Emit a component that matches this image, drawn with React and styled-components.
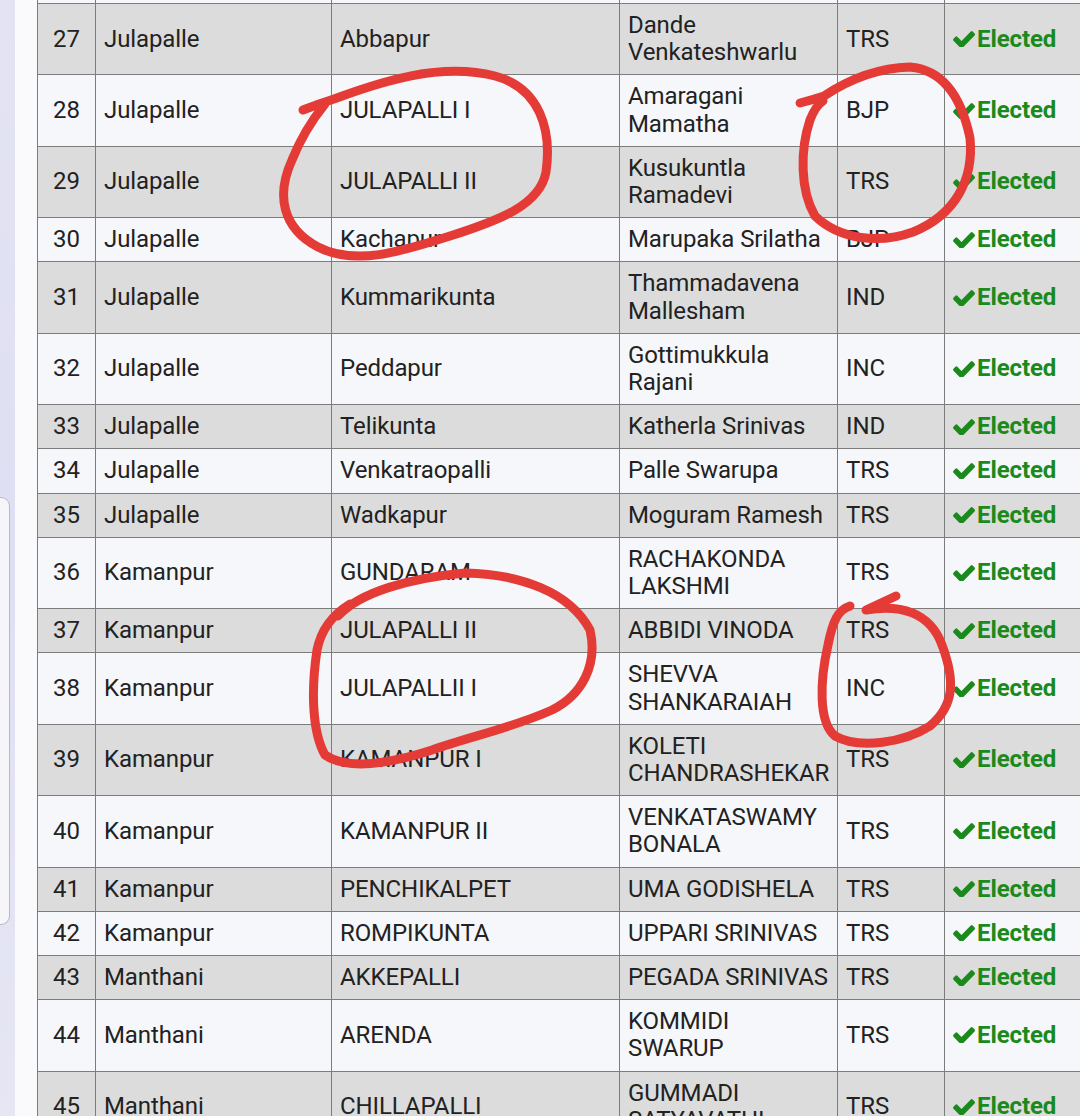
import styled, { createGlobalStyle } from "styled-components";

const GlobalStyle = createGlobalStyle`
  html, body { margin: 0; padding: 0; }
  body {
    background: #fafafc;
    font-family: Roboto, "Liberation Sans", Arial, sans-serif;
    color: #222;
  }
`;

let Page = styled.div`
  position: relative;
  display: flex;
  width: 1080px;
  height: 1116px;
  overflow: hidden;
  background: #fafafc;
`;

let SideRail = styled.div`
  flex-shrink: 0;
  width: 15px;
  padding-top: 497px;
  background: linear-gradient(180deg, #e3e3f3 0%, #dedff2 50%, #e6e6f4 100%);
`;

let RailCard = styled.div`
  width: 10px;
  height: 428px;
  box-sizing: border-box;
  background: #f5f5fa;
  border: 1px solid #b9b9c6;
  border-left: none;
  border-radius: 0 9px 9px 0;
`;

let Gutter = styled.div`
  flex-shrink: 0;
  width: 22px;
`;

let TableWrap = styled.div`
  flex: 1;
  min-width: 0;
  overflow: hidden;
`;

let Table = styled.table`
  border-collapse: collapse;
  table-layout: fixed;
  width: 1060px;
  font-size: 24px;
  line-height: 27.2px;
`;

let Row = styled.tr`
  background: ${(p) => (p.$shade ? "#dcdcdc" : "#f6f7fb")};
`;

let Cell = styled.td`
  border: 1px solid #7c7c7c;
  padding: 8px;
  vertical-align: middle;
  text-align: ${(p) => (p.$center ? "center" : "left")};
  white-space: pre;
  overflow: hidden;
  letter-spacing: -0.1px;
`;

let StubCell = styled.td`
  border: 1px solid #7c7c7c;
  border-top: none;
  height: 3px;
  padding: 0;
`;

let Status = styled.span`
  display: inline-flex;
  align-items: center;
  vertical-align: top;
  height: 27.2px;
  gap: 2px;
  font-weight: 700;
  color: #1a8a1d;

  svg {
    width: 22px;
    height: 16px;
    fill: currentColor;
  }
`;

let Marks = styled.svg`
  position: absolute;
  inset: 0;
  pointer-events: none;

  path {
    fill: none;
    stroke: #e53b36;
    stroke-width: 9;
    stroke-linecap: round;
    stroke-linejoin: round;
  }
`;

function CheckMark() {
  return (
    <svg viewBox="115 330 1556 1100" preserveAspectRatio="none">
      <path d="M1671 566q0 40-28 68l-724 724-136 136q-28 28-68 28t-68-28l-136-136-362-362q-28-28-28-68t28-68l136-136q28-28 68-28t68 28l294 295 656-657q28-28 68-28t68 28l136 136q28 28 28 68z" />
    </svg>
  );
}

const rows = [
  [27, "Julapalle", "Abbapur", "Dande\nVenkateshwarlu", "TRS"],
  [28, "Julapalle", "JULAPALLI I", "Amaragani\nMamatha", "BJP"],
  [29, "Julapalle", "JULAPALLI II", "Kusukuntla\nRamadevi", "TRS"],
  [30, "Julapalle", "Kachapur", "Marupaka Srilatha", "BJP"],
  [31, "Julapalle", "Kummarikunta", "Thammadavena\nMallesham", "IND"],
  [32, "Julapalle", "Peddapur", "Gottimukkula\nRajani", "INC"],
  [33, "Julapalle", "Telikunta", "Katherla Srinivas", "IND"],
  [34, "Julapalle", "Venkatraopalli", "Palle Swarupa", "TRS"],
  [35, "Julapalle", "Wadkapur", "Moguram Ramesh", "TRS"],
  [36, "Kamanpur", "GUNDARAM", "RACHAKONDA\nLAKSHMI", "TRS"],
  [37, "Kamanpur", "JULAPALLI II", "ABBIDI VINODA", "TRS"],
  [38, "Kamanpur", "JULAPALLII I", "SHEVVA\nSHANKARAIAH", "INC"],
  [39, "Kamanpur", "KAMANPUR I", "KOLETI\nCHANDRASHEKAR", "TRS"],
  [40, "Kamanpur", "KAMANPUR II", "VENKATASWAMY\nBONALA", "TRS"],
  [41, "Kamanpur", "PENCHIKALPET", "UMA GODISHELA", "TRS"],
  [42, "Kamanpur", "ROMPIKUNTA", "UPPARI SRINIVAS", "TRS"],
  [43, "Manthani", "AKKEPALLI", "PEGADA SRINIVAS", "TRS"],
  [44, "Manthani", "ARENDA", "KOMMIDI\nSWARUP", "TRS"],
  [45, "Manthani", "CHILLAPALLI", "GUMMADI\nSATYAVATHI", "TRS"],
];

const widths = [58, 236, 288, 218, 107, 153];

// hand drawn circles on top of the screenshot
const strokes = [
  "M303 110 Q318 104 334 99 C380 82 440 62 495 76 C540 88 552 130 546 172 C540 205 500 220 450 236 C400 252 355 266 318 247 C282 228 276 195 292 160 C300 140 312 120 325 104",
  "M800 103 Q812 100 824 96 C845 82 875 68 910 67 C945 70 962 100 970 138 C974 180 955 215 913 232 C880 244 840 240 815 216 C800 190 800 150 810 120 C814 110 818 104 823 101",
  "M338 616 C360 592 410 578 465 573 C520 574 570 592 590 630 C598 665 582 695 552 710 C512 728 472 736 432 750 C395 762 350 772 325 755 C312 732 311 690 317 650 C321 630 332 615 350 604",
  "M896 596 L866 610 C900 604 930 612 942 645 C955 680 955 705 930 726 C905 742 860 750 835 736 C818 722 820 680 828 645 C833 620 838 610 850 606",
];

function App() {
  return (
    <>
      <GlobalStyle />
      <Page>
        <SideRail>
          <RailCard />
        </SideRail>
        <Gutter />
        <TableWrap>
          <Table>
            <colgroup>
              {widths.map((w, i) => (
                <col key={i} style={{ width: w }} />
              ))}
            </colgroup>
            <tbody>
              <Row>
                {widths.map((w, i) => (
                  <StubCell key={i} />
                ))}
              </Row>
              {rows.map(([no, mandal, village, name, party]) => (
                <Row key={no} $shade={no % 2 === 1}>
                  <Cell $center>{no}</Cell>
                  <Cell>{mandal}</Cell>
                  <Cell>{village}</Cell>
                  <Cell>{name}</Cell>
                  <Cell>{party}</Cell>
                  <Cell>
                    <Status>
                      <CheckMark />
                      Elected
                    </Status>
                  </Cell>
                </Row>
              ))}
            </tbody>
          </Table>
        </TableWrap>
        <Marks width="1080" height="1116" viewBox="0 0 1080 1116">
          {strokes.map((d, i) => (
            <path key={i} d={d} />
          ))}
        </Marks>
      </Page>
    </>
  );
}

export default App;
